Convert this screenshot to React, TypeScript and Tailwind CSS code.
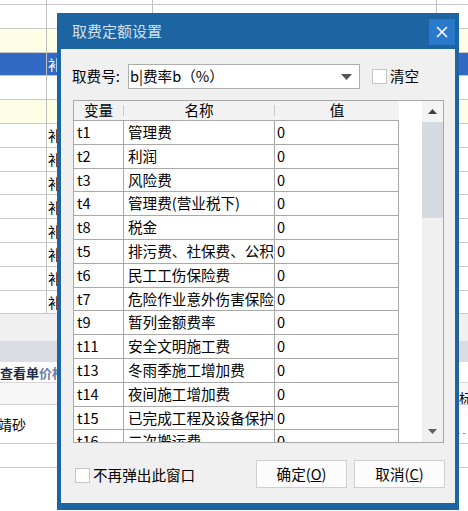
import { X } from "lucide-react"

const feeRows: [string, string][] = [
  ["t1", "管理费"],
  ["t2", "利润"],
  ["t3", "风险费"],
  ["t4", "管理费(营业税下)"],
  ["t8", "税金"],
  ["t5", "排污费、社保费、公积金"],
  ["t6", "民工工伤保险费"],
  ["t7", "危险作业意外伤害保险费"],
  ["t9", "暂列金额费率"],
  ["t11", "安全文明施工费"],
  ["t13", "冬雨季施工增加费"],
  ["t14", "夜间施工增加费"],
  ["t15", "已完成工程及设备保护费"],
  ["t16", "二次搬运费"],
]

// 背景表格行：white / yellow / selected
const sheetRows: { tone: "white" | "yellow" | "blue"; mark: boolean }[] = [
  { tone: "white", mark: false },
  { tone: "yellow", mark: false },
  { tone: "blue", mark: true },
  { tone: "white", mark: false },
  { tone: "yellow", mark: false },
  { tone: "white", mark: true },
  { tone: "white", mark: true },
  { tone: "white", mark: true },
  { tone: "white", mark: true },
  { tone: "white", mark: true },
  { tone: "white", mark: true },
  { tone: "white", mark: true },
  { tone: "white", mark: true },
]

export default function App() {
  return (
    <div className="relative h-[511px] w-[468px] overflow-hidden bg-white font-['Noto_Sans_CJK_SC',sans-serif] text-black">
      <BackgroundSheet />
      <FeeDialog />
    </div>
  )
}

function BackgroundSheet() {
  return (
    <div className="flex flex-col">
      {/* 顶部残行 */}
      <div className="flex h-[5px] border-b border-[#c8c8c8]">
        <div className="w-[47px] border-r border-[#c0c0c0]" />
        <div className="w-[106px] border-r border-[#c0c0c0]" />
        <div className="w-[284px] border-r border-[#c0c0c0]" />
      </div>
      {sheetRows.map((r, i) => (
        <div
          key={i}
          className={
            "flex h-[23.8px] border-b border-[#c8c8c8] " +
            (r.tone === "yellow"
              ? "bg-[#fefde6]"
              : r.tone === "blue"
                ? "bg-[#3169c5]"
                : "bg-white")
          }
        >
          <div className="w-[47px] border-r border-[#c0c0c0]" />
          <div
            className={
              "flex w-[106px] items-center border-r border-[#c0c0c0] pl-[1px] text-[14px] leading-none " +
              (r.tone === "blue" ? "text-white" : "text-black")
            }
          >
            {r.mark ? "补" : ""}
          </div>
          <div className="w-[284px] border-r border-[#c0c0c0]" />
        </div>
      ))}
      {/* 下方面板 */}
      <div className="h-[27px] bg-[#f0f0f0]" />
      <div className="h-[21px] bg-[#dadde3]" />
      <div className="flex h-[21px] items-center border-b border-[#d8d8d8] bg-white text-[13px] leading-none font-bold">
        <span className="text-[#1c2b4c]">查看单</span>
        <span className="text-[#6b80a8]">价构</span>
      </div>
      <div className="flex h-[22px] justify-end border-b border-[#d0d0d0] bg-[#f7f7f7] text-[13px] leading-none">
        <span className="w-[9px] overflow-hidden pt-[8px]">标</span>
      </div>
      <div className="flex h-[39px] items-center justify-between border-b border-[#c8c8c8] bg-white text-[14px] leading-none">
        <span className="ml-[-2px]">靖砂</span>
        <span className="mr-[2px] mt-[16px] text-[10px] text-[#e03030]">- -</span>
      </div>
      <div className="h-[24px] border-b border-[#c8c8c8] bg-white" />
    </div>
  )
}

function CheckBox() {
  return <div className="h-[15px] w-[15px] shrink-0 border border-[#c6c6c6] bg-white" />
}

function FeeDialog() {
  return (
    <div className="absolute left-[57px] top-[13px] flex h-[497px] w-[402px] flex-col bg-[#1d64a3] px-[4px] pb-[7px]">
      {/* 标题栏 */}
      <div className="flex h-[36px] shrink-0 items-start">
        <div className="mt-[10px] pl-[11px] text-[15px] leading-none text-[#d2e0ee]">
          取费定额设置
        </div>
        <div className="ml-auto mt-[6px] flex h-[26px] w-[26px] items-center justify-center bg-[#2a7acb]">
          <X className="size-[18px] text-white" strokeWidth={2.2} />
        </div>
      </div>

      {/* 主体 */}
      <div className="flex flex-1 flex-col bg-[#f0f0f0] px-[11px] pt-[15px] text-[14.6px] leading-none">
        <div className="flex h-[25px] items-center">
          <div className="w-[56px]">取费号:</div>
          <div className="flex h-[25px] w-[232px] items-center border border-[#adadad] bg-white pl-[1px] pr-[7px]">
            <span>b|费率b（%）</span>
            <svg className="ml-auto" width="11" height="6" viewBox="0 0 11 6">
              <path d="M0 0 L11 0 L5.5 6 Z" fill="#555" />
            </svg>
          </div>
          <div className="ml-[12px] flex items-center gap-[3px]">
            <CheckBox />
            <span>清空</span>
          </div>
        </div>

        {/* 表格 */}
        <div className="ml-[1px] mt-[11px] flex h-[343px] w-[371px] border border-[#a8a8a8] bg-white">
          <div className="flex flex-1 flex-col overflow-hidden">
            <div className="flex h-[20px] w-[325px] shrink-0 items-stretch border-b border-[#a8a8a8] bg-[#f2f2f2]">
              <div className="flex w-[49px] items-center justify-center">变量</div>
              <div className="my-[4px] w-px bg-[#c8c8c8]" />
              <div className="flex w-[150px] items-center justify-center">名称</div>
              <div className="my-[4px] w-px bg-[#c8c8c8]" />
              <div className="flex w-[124px] items-center justify-center">值</div>
            </div>
            {feeRows.map(([code, name]) => (
              <div
                key={code}
                className="flex h-[23.8px] w-[325px] shrink-0 border-b border-[#a8a8a8]"
              >
                <div className="flex w-[50px] items-center border-r border-[#a8a8a8] pl-[3px]">
                  {code}
                </div>
                <div className="flex w-[151px] items-center overflow-hidden whitespace-nowrap border-r border-[#a8a8a8] pl-[4px]">
                  {name}
                </div>
                <div className="flex w-[124px] items-center border-r border-[#a8a8a8] pl-[2px]">
                  0
                </div>
              </div>
            ))}
          </div>
          {/* 滚动条 */}
          <div className="flex w-[21px] shrink-0 flex-col bg-[#f0f0f0]">
            <div className="flex h-[21px] items-center justify-center bg-[#f4f4f4]">
              <svg width="9" height="5" viewBox="0 0 9 5">
                <path d="M0 5 L9 5 L4.5 0 Z" fill="#404040" />
              </svg>
            </div>
            <div className="h-[96px] bg-[#d5d9e0]" />
            <div className="flex-1" />
            <div className="flex h-[21px] items-center justify-center">
              <svg width="9" height="5" viewBox="0 0 9 5">
                <path d="M0 0 L9 0 L4.5 5 Z" fill="#606060" />
              </svg>
            </div>
          </div>
        </div>

        {/* 底部 */}
        <div className="mt-[17px] flex h-[28px] items-center">
          <div className="ml-[3px] mt-[2px] flex items-center gap-[3px]">
            <CheckBox />
            <span>不再弹出此窗口</span>
          </div>
          <div className="ml-auto mr-[-1px] flex gap-[7px]">
            <button className="flex h-[28px] w-[91px] items-center justify-center border border-[#cfcfcf] bg-[#fcfcfc]">
              确定(<span className="underline">O</span>)
            </button>
            <button className="flex h-[28px] w-[91px] items-center justify-center border border-[#cfcfcf] bg-[#fcfcfc]">
              取消(<span className="underline">C</span>)
            </button>
          </div>
        </div>
      </div>
    </div>
  )
}
